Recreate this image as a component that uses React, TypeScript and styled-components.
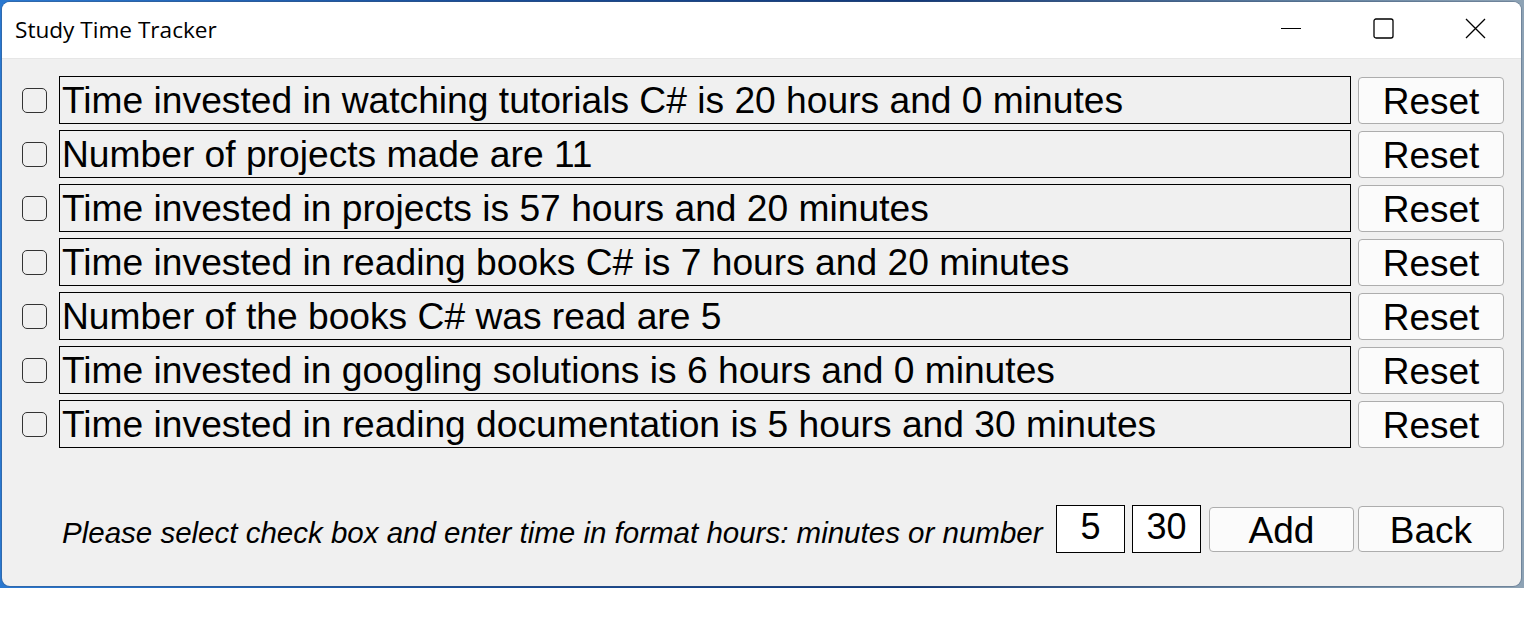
import styled, {createGlobalStyle} from 'styled-components';

const GlobalStyle = createGlobalStyle`
  html, body {
    margin: 0;
    padding: 0;
    background: #fff;
  }
`;

const Desktop = styled.div`
  width: 1524px;
  height: 588px;
  padding: 2px 3px 2px 2px;
  box-sizing: border-box;
  background: linear-gradient(90deg, #2a78d0 0%, #1a4f9a 30%, #12397a 60%, #5f7f9f 85%, #8ea3b5 100%);
`;

const Window = styled.div`
  display: flex;
  flex-direction: column;
  height: 100%;
  border-radius: 8px;
  overflow: hidden;
  background: #f0f0f0;
  box-shadow: 0 0 0 1px rgba(60, 80, 110, 0.35);
`;

const TitleBar = styled.div`
  display: flex;
  align-items: center;
  height: 56px;
  padding-left: 13px;
  background: #fff;
  border-bottom: 1px solid #e6e6e6;
`;

const Title = styled.div`
  flex: 1;
  font-family: 'Open Sans', 'Noto Sans', sans-serif;
  font-size: 22.6px;
  color: #000;
  padding-bottom: 1px;
`;

const Controls = styled.div`
  display: flex;
  height: 100%;
`;

const ControlButton = styled.div`
  display: flex;
  align-items: center;
  justify-content: center;
  width: 92px;
  height: 100%;
  padding-bottom: 4px;
  box-sizing: border-box;
`;

const Body = styled.div`
  display: flex;
  flex-direction: column;
  flex: 1;
  padding: 17px 17px 0 20px;
`;

const RowList = styled.div`
  display: flex;
  flex-direction: column;
  gap: 6px;
`;

const Row = styled.div`
  display: flex;
  align-items: center;
  height: 48px;
`;

const Check = styled.input`
  appearance: none;
  width: 25px;
  height: 25px;
  margin: 0 12px 0 0;
  box-sizing: border-box;
  border: 1.5px solid #333;
  border-radius: 5px;
  background: #f0f0f0;
  flex-shrink: 0;
`;

const Label = styled.div`
  flex: 1;
  height: 48px;
  box-sizing: border-box;
  border: 1px solid #000;
  padding: 0 0 0 2px;
  display: flex;
  align-items: center;
  font-family: 'Liberation Sans', Arial, sans-serif;
  font-size: 37.2px;
  color: #000;
  white-space: nowrap;
`;

const Button = styled.div<{$w?: number; $h?: number}>`
  display: flex;
  align-items: center;
  justify-content: center;
  width: ${({$w}) => $w ?? 146}px;
  height: ${({$h}) => $h ?? 47}px;
  box-sizing: border-box;
  border: 1px solid #adadad;
  border-radius: 4px;
  background: #fbfbfb;
  font-family: 'Liberation Sans', Arial, sans-serif;
  font-size: 37px;
  color: #000;
  padding-top: 3px;
  flex-shrink: 0;
`;

const RowButton = styled(Button)`
  margin-left: 7px;
`;

const Footer = styled.div`
  display: flex;
  align-items: center;
  margin-top: 57px;
  padding-left: 40px;
`;

const Hint = styled.div`
  flex: 1;
  font-family: 'Liberation Sans', Arial, sans-serif;
  font-style: italic;
  font-size: 29.5px;
  color: #000;
  padding-top: 8px;
  white-space: nowrap;
`;

const TimeBox = styled.div`
  display: flex;
  align-items: center;
  justify-content: center;
  width: 69px;
  height: 48px;
  box-sizing: border-box;
  border: 1px solid #000;
  background: #fff;
  margin-right: 7px;
  font-family: 'Liberation Sans', Arial, sans-serif;
  font-size: 36px;
  padding-bottom: 4px;
  color: #000;
`;

const FooterButton = styled(Button)`
  margin-left: 1px;
  & + & {
    margin-left: 4px;
  }
`;

const rows = [
  'Time invested in watching tutorials C# is 20 hours and 0 minutes',
  'Number of projects made are 11',
  'Time invested in projects is 57 hours and 20 minutes',
  'Time invested in reading books C# is 7 hours and 20 minutes',
  'Number of the books C# was read are 5',
  'Time invested in googling solutions is 6 hours and 0 minutes',
  'Time invested in reading documentation is 5 hours and 30 minutes'
];

function App(): JSX.Element {
  return (
    <>
      <GlobalStyle />
      <Desktop>
        <Window>
          <TitleBar>
            <Title>Study Time Tracker</Title>
            <Controls>
              <ControlButton>
                <svg width="20" height="20" viewBox="0 0 20 20">
                  <line x1="0" y1="10.5" x2="20" y2="10.5" stroke="#000" strokeWidth="1.2" />
                </svg>
              </ControlButton>
              <ControlButton>
                <svg width="21" height="21" viewBox="0 0 21 21">
                  <rect x="1" y="1" width="19" height="19" rx="2" fill="none" stroke="#000" strokeWidth="1.3" />
                </svg>
              </ControlButton>
              <ControlButton>
                <svg width="21" height="21" viewBox="0 0 21 21">
                  <path d="M1 1 L20 20 M20 1 L1 20" stroke="#000" strokeWidth="1.3" />
                </svg>
              </ControlButton>
            </Controls>
          </TitleBar>
          <Body>
            <RowList>
              {rows.map(text => (
                <Row key={text}>
                  <Check type="checkbox" />
                  <Label>{text}</Label>
                  <RowButton>Reset</RowButton>
                </Row>
              ))}
            </RowList>
            <Footer>
              <Hint>Please select check box and enter time in format hours: minutes or number</Hint>
              <TimeBox>5</TimeBox>
              <TimeBox>30</TimeBox>
              <FooterButton $w={145} $h={45}>Add</FooterButton>
              <FooterButton $h={46}>Back</FooterButton>
            </Footer>
          </Body>
        </Window>
      </Desktop>
    </>
  );
}

export default App;
